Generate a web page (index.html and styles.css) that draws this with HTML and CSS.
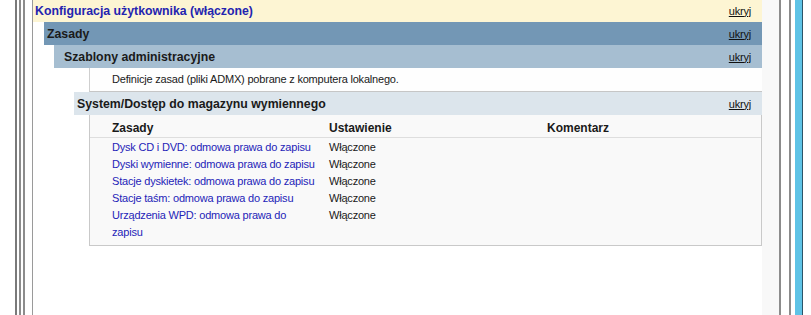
FILE: index.html
```html
<!DOCTYPE html>
<html lang="pl">

<head>
    <meta charset="UTF-8">
    <title>Raport zasad grupy</title>
    <link rel="stylesheet" href="styles.css">
</head>

<body>
    <div class="frame frame-left">
        <span class="rule"></span>
        <span class="rule"></span>
        <span class="rule"></span>
        <span class="rule rule-inner"></span>
    </div>

    <div class="pane">
        <div class="section">
            <div class="head head-user">
                <span class="title">Konfiguracja użytkownika (włączone)</span>
                <a href="#" class="toggle">ukryj</a>
            </div>
            <div class="section lvl2">
                <div class="head head-policies">
                    <span class="title">Zasady</span>
                    <a href="#" class="toggle">ukryj</a>
                </div>
                <div class="section lvl3">
                    <div class="head head-templates">
                        <span class="title">Szablony administracyjne</span>
                        <a href="#" class="toggle">ukryj</a>
                    </div>
                    <div class="explain">Definicje zasad (pliki ADMX) pobrane z komputera lokalnego.</div>
                    <div class="section lvl4">
                        <div class="head head-category">
                            <span class="title">System/Dostęp do magazynu wymiennego</span>
                            <a href="#" class="toggle">ukryj</a>
                        </div>
                        <div class="policies">
                            <div class="row row-head">
                                <span>Zasady</span>
                                <span>Ustawienie</span>
                                <span>Komentarz</span>
                            </div>
                            <div class="row">
                                <a href="#">Dysk CD i DVD: odmowa prawa do zapisu</a>
                                <span>Włączone</span>
                                <span></span>
                            </div>
                            <div class="row">
                                <a href="#">Dyski wymienne: odmowa prawa do zapisu</a>
                                <span>Włączone</span>
                                <span></span>
                            </div>
                            <div class="row">
                                <a href="#">Stacje dyskietek: odmowa prawa do zapisu</a>
                                <span>Włączone</span>
                                <span></span>
                            </div>
                            <div class="row">
                                <a href="#">Stacje taśm: odmowa prawa do zapisu</a>
                                <span>Włączone</span>
                                <span></span>
                            </div>
                            <div class="row">
                                <a href="#">Urządzenia WPD: odmowa prawa do zapisu</a>
                                <span>Włączone</span>
                                <span></span>
                            </div>
                        </div>
                    </div>
                </div>
            </div>
        </div>
    </div>

    <div class="gutter"></div>

    <div class="frame frame-right">
        <span class="rule"></span>
        <span class="rule"></span>
        <span class="accent"></span>
    </div>
</body>

</html>
```

FILE: styles.css
```css
html {
    background-color: #ffffff;
    font-family: "Liberation Sans", Arial, sans-serif;
    font-size: 11px;
    letter-spacing: -0.2px;
    color: #1a1a1a;
}

body {
    display: flex;
    margin: 0;
    height: 315px;
    overflow: hidden;
}

a {
    color: #2424b8;
    text-decoration: none;
}

/* window chrome */
.frame {
    display: flex;
    height: 100%;
}

.frame-left {
    padding-left: 15px;
    gap: 2px;
}

.rule {
    width: 2px;
    background-color: #8c8c8c;
}

.frame-left .rule-inner {
    width: 1px;
    margin-left: 5px;
    background-color: #9a9a9a;
}

.frame-left .rule:first-child {
    background-color: #7a7a7a;
}

.frame-right {
    gap: 8px;
    padding-right: 8px;
}

.frame-right .accent {
    width: 7px;
    margin-left: -4px;
    background-color: #5ec3e6;
    border-right: 1px solid #2b5468;
}

.gutter {
    width: 17px;
    background-color: #f8f8f8;
}

/* report */
.pane {
    width: 730px;
    margin-top: -1px;
    background-color: #ffffff;
}

.lvl2 {
    margin-left: 11px;
}

.lvl3 {
    margin-left: 10px;
}

.lvl4 {
    margin-left: 20px;
}

.head {
    display: flex;
    justify-content: space-between;
    align-items: center;
    height: 23px;
    padding: 0 11px 0 3px;
    font-size: 12.3px;
    letter-spacing: 0;
    font-weight: bold;
}

.toggle {
    color: #111111;
    font-size: 11px;
    letter-spacing: -0.2px;
    font-weight: normal;
    text-decoration: underline;
}

.head-user {
    background-color: #fdf5d3;
    color: #2424b0;
    padding-left: 2px;
}

.head-policies {
    background-color: #7397b5;
}

.head-templates {
    background-color: #a6bed1;
    padding-left: 10px;
}

.explain {
    margin-left: 35px;
    height: 23px;
    line-height: 23px;
    padding-left: 22px;
    border-left: 1px solid #cfcfcf;
    border-bottom: 1px solid #c6c6c6;
    background-color: #fefefe;
}

.head-category {
    background-color: #dce5ec;
}

.policies {
    margin-left: 15px;
    padding: 0 0 4px 22px;
    background-color: #f9f9f9;
    border: 1px solid #c9c9c9;
    border-top: none;
}

.row {
    display: grid;
    grid-template-columns: 217px 218px 1fr;
    line-height: 17px;
}

.row a {
    padding-right: 12px;
}

.row-head {
    height: 22px;
    line-height: 27px;
    margin: 0 0 1px -22px;
    padding-left: 22px;
    font-size: 12px;
    letter-spacing: 0;
    font-weight: bold;
    border-bottom: 1px solid #dedede;
}
```
